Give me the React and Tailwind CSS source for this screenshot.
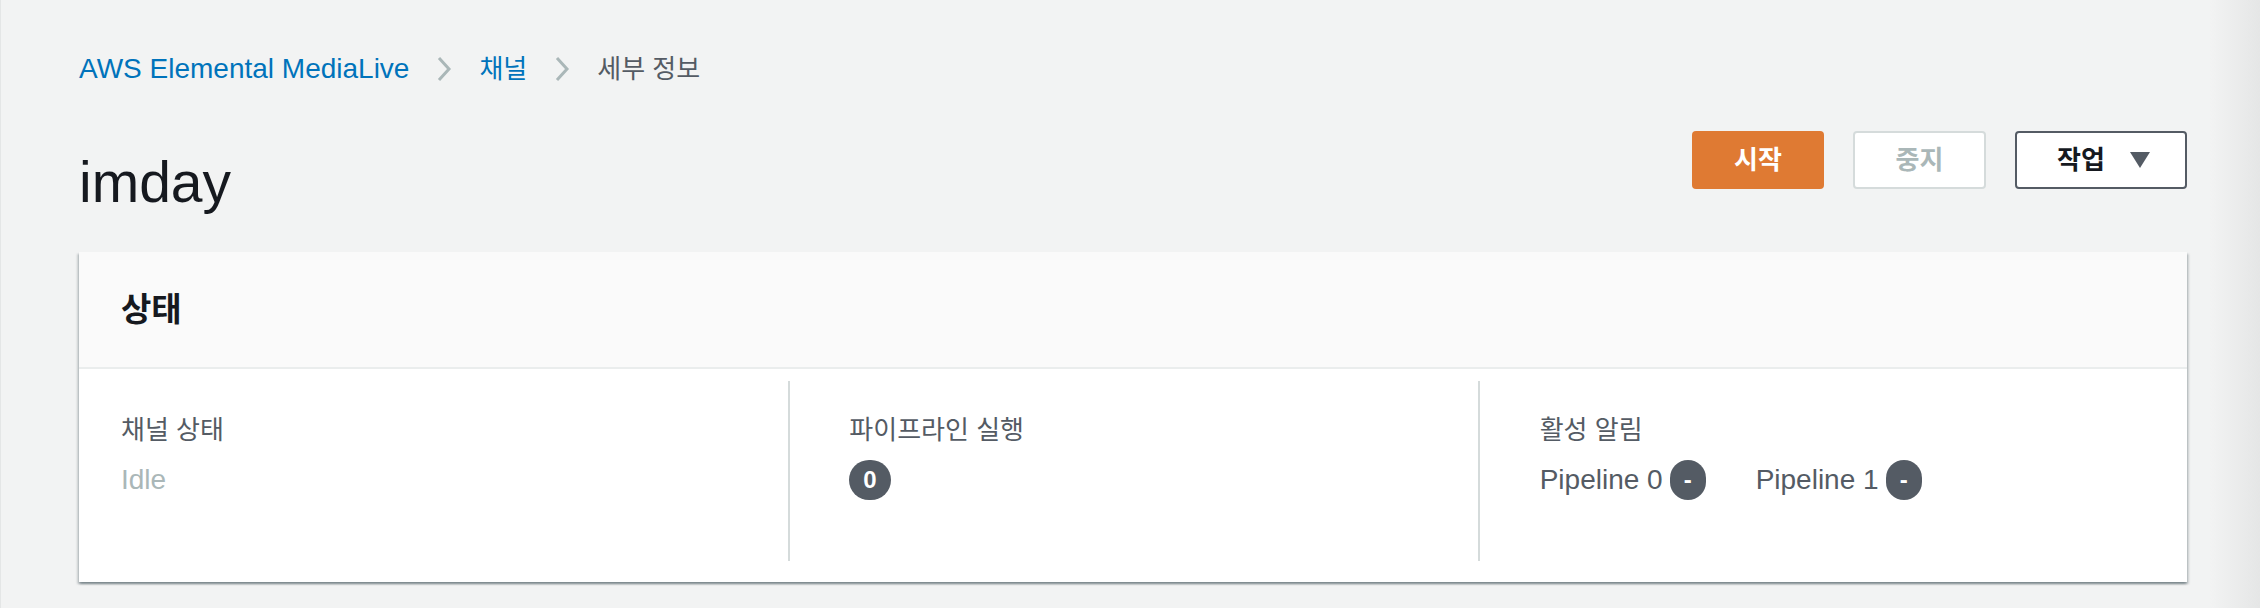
import React from 'react';

const FONT = { fontFamily: '"Liberation Sans", "Noto Sans CJK KR", sans-serif' };

function Chevron() {
  return (
    <svg width="16" height="26" viewBox="0 0 16 26" className="shrink-0">
      <polyline points="3,2 13,13 3,24" fill="none" stroke="#aab7b8" strokeWidth="3" />
    </svg>
  );
}

function Badge({ children }) {
  return (
    <span className="inline-flex h-[40px] items-center justify-center rounded-full bg-[#545b64] px-[14px] text-[24px] font-bold text-white">
      {children}
    </span>
  );
}

export default function App() {
  return (
    <div className="flex min-h-[608px] w-full border-l border-[#e4e6e6] bg-[#f2f3f3]" style={FONT}>
      <div className="flex-1 pl-[78px] pr-[23px] pt-[49px]">
        {/* breadcrumb */}
        <nav className="flex h-[40px] items-center gap-[27px]">
          <a className="text-[28px] text-[#0073bb]">AWS Elemental MediaLive</a>
          <Chevron />
          <a className="text-[26px] text-[#0073bb]">채널</a>
          <Chevron />
          <span className="text-[26px] text-[#545b64]">세부 정보</span>
        </nav>

        {/* header */}
        <div className="mt-[42px] flex items-start justify-between">
          <h1 className="mt-[23px] text-[57px] leading-none text-[#16191f]">imday</h1>
          <div className="flex gap-[29px]">
            <button className="h-[58px] w-[132px] rounded-[4px] bg-[#df7a33] text-[26px] font-bold text-white">
              시작
            </button>
            <button className="h-[58px] w-[133px] rounded-[4px] border-2 border-[#d5dbdb] bg-white text-[26px] font-bold text-[#aab7b8]">
              중지
            </button>
            <button className="flex h-[58px] w-[172px] items-center justify-between rounded-[4px] border-2 border-[#545b64] bg-white pl-[40px] pr-[35px] text-[26px] font-bold text-[#16191f]">
              <span>작업</span>
              <svg width="20" height="16" viewBox="0 0 20 16">
                <polygon points="0,0 20,0 10,16" fill="#545b64" />
              </svg>
            </button>
          </div>
        </div>

        {/* status card */}
        <section className="mt-[41px] bg-white shadow-[0_2px_2px_0_rgba(0,28,36,0.3),2px_2px_2px_0_rgba(0,28,36,0.15),-2px_2px_2px_0_rgba(0,28,36,0.15)]">
          <div className="flex h-[117px] items-center border-b-2 border-[#eaeded] bg-[#fafafa] px-[42px]">
            <h2 className="text-[33px] font-bold text-[#16191f]">상태</h2>
          </div>
          <div className="grid grid-cols-3 px-[20px] pb-[21px] pt-[12px]">
            <div className="h-[180px] pl-[22px] pt-[29px]">
              <div className="flex h-[40px] items-center text-[26px] text-[#545b64]">채널 상태</div>
              <div className="mt-[10px] flex h-[40px] items-center text-[28px] text-[#aab7b8]">Idle</div>
            </div>
            <div className="h-[180px] border-l-2 border-[#d5dbdb] pl-[59px] pt-[29px]">
              <div className="flex h-[40px] items-center text-[26px] text-[#545b64]">파이프라인 실행</div>
              <div className="mt-[10px] flex h-[40px] items-center">
                <Badge>0</Badge>
              </div>
            </div>
            <div className="h-[180px] border-l-2 border-[#d5dbdb] pl-[60px] pt-[29px]">
              <div className="flex h-[40px] items-center text-[26px] text-[#545b64]">활성 알림</div>
              <div className="mt-[10px] flex h-[40px] items-center gap-[50px] text-[28px] text-[#545b64]">
                <span className="flex items-center gap-[7px]">
                  Pipeline 0 <Badge>-</Badge>
                </span>
                <span className="flex items-center gap-[7px]">
                  Pipeline 1 <Badge>-</Badge>
                </span>
              </div>
            </div>
          </div>
        </section>
      </div>
      <div className="w-[50px] bg-gradient-to-r from-[#f2f3f3] to-[#e5e6e6]" />
    </div>
  );
}
